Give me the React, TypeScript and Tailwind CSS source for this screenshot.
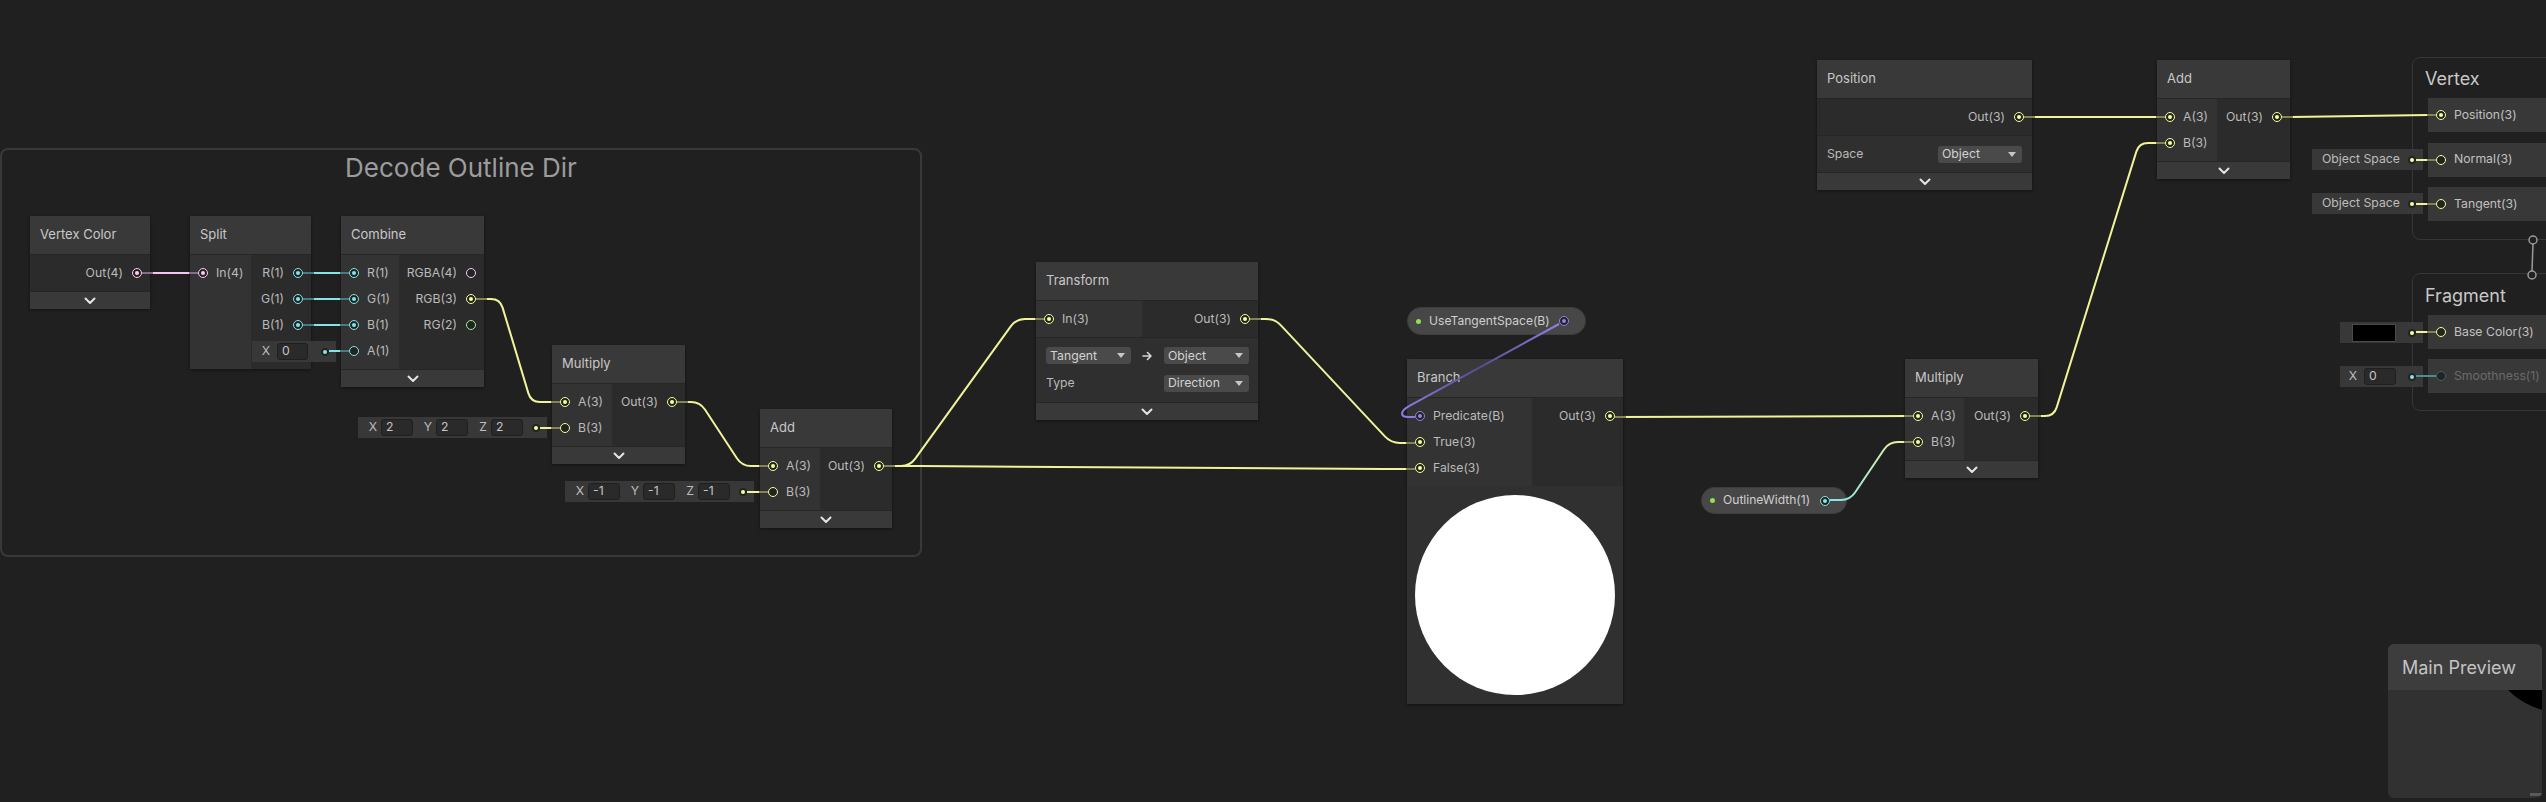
import React from 'react';

type PT = 'v1' | 'v2' | 'v3' | 'v4' | 'b' | 'off';

const RING: Record<PT, string> = {
  v1: 'border-[#84e4e7]',
  v2: 'border-[#9aef92]',
  v3: 'border-[#f6ff9a]',
  v4: 'border-[#fbcbf4]',
  b: 'border-[#9481e6]',
  off: 'border-[#3f6466]',
};

const DOT: Record<PT, string> = {
  v1: 'bg-[#84e4e7]',
  v2: 'bg-[#9aef92]',
  v3: 'bg-[#f6ff9a]',
  v4: 'bg-[#fbcbf4]',
  b: 'bg-[#9481e6]',
  off: 'bg-[#3f6466]',
};

interface PortDef {
  label: string;
  t: PT;
  on?: boolean;
}

const Ring = ({ t, on }: { t: PT; on?: boolean }) => (
  <span className={`flex h-[10px] w-[10px] shrink-0 items-center justify-center rounded-full border-[1.5px] bg-[#232323] ${RING[t]}`}>
    {on && <span className={`h-[4px] w-[4px] rounded-full ${DOT[t]}`} />}
  </span>
);

const Chevron = () => (
  <svg width="12" height="8" viewBox="0 0 12 8">
    <path d="M1.5 1.5 6 6 10.5 1.5" fill="none" stroke="#e4e4e4" strokeWidth="2" strokeLinecap="round" strokeLinejoin="round" />
  </svg>
);

const Drop = ({ label, w }: { label: string; w: string }) => (
  <div className={`flex h-[17px] items-center justify-between rounded-[3px] bg-[#4a4a4a] pl-[4px] pr-[6px] text-[#d2d2d2] ${w}`}>
    <span>{label}</span>
    <span className="h-0 w-0 border-x-[4px] border-t-[5px] border-x-transparent border-t-[#c6c6c6]" />
  </div>
);

interface NodeProps {
  pos: string;
  title: string;
  inCol?: string;
  ins?: PortDef[];
  outs?: PortDef[];
  chevron?: boolean;
  children?: React.ReactNode;
}

const Node: React.FC<NodeProps> = ({ pos, title, inCol, ins, outs, chevron = true, children }) => (
  <div className={`absolute flex flex-col text-[12.25px] text-[#bababa] shadow-[0_1px_3px_rgba(0,0,0,0.45)] ${pos}`}>
    <div className="flex h-[39px] shrink-0 items-center border-b border-[#262626] bg-[#393939] px-[10px] text-[13px] text-[#c8c8c8]">
      {title}
    </div>
    <div className="flex">
      {ins && (
        <div className={`flex flex-col bg-[#333333] py-[5px] ${inCol}`}>
          {ins.map((p) => (
            <div key={p.label} className="flex h-[26px] items-center gap-[8px] pl-[8px]">
              <Ring t={p.t} on={p.on} />
              <span>{p.label}</span>
            </div>
          ))}
        </div>
      )}
      <div className="flex flex-1 flex-col bg-[#2b2b2b] py-[5px]">
        {outs?.map((p, i) => (
          <div key={i} className="flex h-[26px] items-center justify-end gap-[9px] pr-[8px]">
            {p.label && <span>{p.label}</span>}
            <Ring t={p.t} on={p.on} />
          </div>
        ))}
      </div>
    </div>
    {children}
    {chevron && (
      <div className="flex h-[18px] items-center justify-center border-t border-[#262626] bg-[#393939]">
        <Chevron />
      </div>
    )}
  </div>
);

const Field = ({ v, w = 'w-[32px]' }: { v: string; w?: string }) => (
  <span className={`flex h-[17px] items-center rounded-[3px] border border-[#1f1f1f] bg-[#2a2a2a] pl-[4px] text-[#c4c4c4] ${w}`}>{v}</span>
);

const Inline = ({ pos, t, children }: { pos: string; t: PT; children: React.ReactNode }) => (
  <div className={`absolute flex h-[21px] items-center bg-[#383838] text-[12.25px] text-[#bdbdbd] ${pos}`}>
    {children}
    <span className="ml-auto mr-[7px] flex h-[8px] w-[8px] items-center justify-center rounded-full bg-[#242424]">
      <span className={`h-[4px] w-[4px] rounded-full ${DOT[t]}`} />
    </span>
  </div>
);

const Vec = ({ v }: { v: string }) => (
  <div className="flex items-center gap-[9px] pl-[9px]">
    {['X', 'Y', 'Z'].map((a) => (
      <div key={a} className="flex items-center gap-[2px]">
        <span className="w-[12px] text-center">{a}</span>
        <Field v={v} />
      </div>
    ))}
  </div>
);

const Pill = ({ pos, label, t }: { pos: string; label: string; t: PT }) => (
  <div className={`absolute flex items-center rounded-full border border-[#3d3d3d] bg-[#474747] pl-[8px] text-[12.1px] text-[#cfcfcf] ${pos}`}>
    <span className="h-[5px] w-[5px] shrink-0 rounded-full bg-[#8fe055]" />
    <span className="ml-[8px] whitespace-nowrap">{label}</span>
    <span className="ml-auto mr-[16px]">
      <Ring t={t} on />
    </span>
  </div>
);

const BlockRow = ({ label, t, on, dim }: { label: string; t: PT; on?: boolean; dim?: boolean }) => (
  <div className="flex h-[34px] items-center gap-[8px] bg-[#383838] pl-[8px] text-[12.25px]">
    <Ring t={t} on={on} />
    <span className={dim ? 'text-[#6a6a6a]' : 'text-[#c0c0c0]'}>{label}</span>
  </div>
);

type Pt = [number, number];

// straight segments with softened corners, like the graph view draws edges
const route = (pts: Pt[], r = 9) => {
  let d = `M ${pts[0][0]} ${pts[0][1]}`;
  for (let i = 1; i < pts.length - 1; i++) {
    const [px, py] = pts[i - 1];
    const [cx, cy] = pts[i];
    const [nx, ny] = pts[i + 1];
    const l1 = Math.hypot(cx - px, cy - py);
    const l2 = Math.hypot(nx - cx, ny - cy);
    const a = Math.min(r, l1 / 2);
    const b = Math.min(r, l2 / 2);
    d += ` L ${cx - ((cx - px) / l1) * a} ${cy - ((cy - py) / l1) * a}`;
    d += ` Q ${cx} ${cy} ${cx + ((nx - cx) / l2) * b} ${cy + ((ny - cy) / l2) * b}`;
  }
  const last = pts[pts.length - 1];
  return d + ` L ${last[0]} ${last[1]}`;
};

const YEL = '#f1f39a';
const CYAN = '#84e4e7';
const PINK = '#f7c4f0';

const wires: { pts: Pt[]; c: string }[] = [
  { pts: [[142, 273], [198, 273]], c: PINK },
  { pts: [[303, 273], [349, 273]], c: CYAN },
  { pts: [[303, 299], [349, 299]], c: CYAN },
  { pts: [[303, 325], [349, 325]], c: CYAN },
  { pts: [[329, 351], [349, 351]], c: CYAN },
  { pts: [[476, 299], [500, 299], [531, 402], [560, 402]], c: YEL },
  { pts: [[540, 428], [560, 428]], c: YEL },
  { pts: [[677, 402], [700, 402], [742, 466], [768, 466]], c: YEL },
  { pts: [[747, 492], [768, 492]], c: YEL },
  { pts: [[884, 466], [910, 466], [1016, 319], [1044, 319]], c: YEL },
  { pts: [[884, 466], [910, 466], [1392, 469], [1415, 469]], c: YEL },
  { pts: [[1250, 319], [1275, 319], [1391, 443], [1415, 443]], c: YEL },
  { pts: [[1615, 417], [1913, 416]], c: YEL },
  { pts: [[1830, 500], [1850, 500], [1889, 442], [1913, 442]], c: 'url(#ow)' },
  { pts: [[2030, 416], [2054, 416], [2139, 143], [2165, 143]], c: YEL },
  { pts: [[2024, 117], [2165, 117]], c: YEL },
  { pts: [[2282, 117], [2300, 117], [2420, 115], [2436, 115]], c: YEL },
  { pts: [[2416, 160], [2436, 160]], c: YEL },
  { pts: [[2416, 204], [2436, 204]], c: YEL },
  { pts: [[2416, 332], [2436, 332]], c: YEL },
  { pts: [[2416, 376], [2436, 376]], c: '#4d8b8e' },
  { pts: [[1559, 324], [1402, 410], [1402, 417], [1415, 417]], c: 'url(#pu)' },
];

const outStubs: Pt[] = [
  [137, 273], [298, 273], [298, 299], [298, 325], [471, 299], [672, 402], [879, 466],
  [1245, 319], [1610, 417], [2025, 416], [2019, 117], [2277, 117],
];
const inStubs: Pt[] = [
  [203, 273], [354, 273], [354, 299], [354, 325], [354, 351], [565, 402], [565, 428],
  [773, 466], [773, 492], [1049, 319], [1420, 443], [1420, 469], [1918, 416], [1918, 442],
  [2170, 117], [2170, 143], [2441, 115], [2441, 160], [2441, 204], [2441, 332],
];

const v3 = (label: string, on = true): PortDef => ({ label, t: 'v3', on });

export default function App() {
  return (
    <div className="relative h-[802px] w-[2546px] overflow-hidden bg-[#202020] font-['Inter','Liberation_Sans',sans-serif]">
      {/* group frame */}
      <div className="absolute left-0 top-[148px] h-[409px] w-[922px] rounded-[8px] border-2 border-[#393939]">
        <div className="pt-[2px] text-center text-[26px] leading-[32px] text-[#9c9c9c]">Decode Outline Dir</div>
      </div>

      <Node pos="left-[30px] top-[216px] w-[120px]" title="Vertex Color" outs={[{ label: 'Out(4)', t: 'v4', on: true }]} />
      <Node
        pos="left-[190px] top-[216px] w-[121px]"
        title="Split"
        inCol="w-[61px]"
        chevron={false}
        ins={[{ label: 'In(4)', t: 'v4', on: true }]}
        outs={[
          { label: 'R(1)', t: 'v1', on: true },
          { label: 'G(1)', t: 'v1', on: true },
          { label: 'B(1)', t: 'v1', on: true },
          { label: '', t: 'v1' },
        ]}
      />
      <Node
        pos="left-[341px] top-[216px] w-[143px]"
        title="Combine"
        inCol="w-[58px]"
        ins={[
          { label: 'R(1)', t: 'v1', on: true },
          { label: 'G(1)', t: 'v1', on: true },
          { label: 'B(1)', t: 'v1', on: true },
          { label: 'A(1)', t: 'v1' },
        ]}
        outs={[
          { label: 'RGBA(4)', t: 'v4' },
          { label: 'RGB(3)', t: 'v3', on: true },
          { label: 'RG(2)', t: 'v2' },
        ]}
      />
      <Node pos="left-[552px] top-[345px] w-[133px]" title="Multiply" inCol="w-[60px]" ins={[v3('A(3)'), v3('B(3)', false)]} outs={[v3('Out(3)')]} />
      <Node pos="left-[760px] top-[409px] w-[132px]" title="Add" inCol="w-[60px]" ins={[v3('A(3)'), v3('B(3)', false)]} outs={[v3('Out(3)')]} />

      <Inline pos="left-[252px] top-[341px] w-[84px]" t="v1">
        <div className="flex items-center gap-[5px] pl-[8px]">
          <span className="w-[12px] text-center">X</span>
          <Field v="0" w="w-[31px]" />
        </div>
      </Inline>
      <Inline pos="left-[358px] top-[417px] w-[189px]" t="v3">
        <Vec v="2" />
      </Inline>
      <Inline pos="left-[565px] top-[481px] w-[189px]" t="v3">
        <Vec v="-1" />
      </Inline>

      <Node pos="left-[1036px] top-[262px] w-[222px]" title="Transform" inCol="w-[106px]" ins={[v3('In(3)')]} outs={[v3('Out(3)')]}>
        <div className="flex h-[65px] flex-col justify-center gap-[10px] border-t border-[#262626] bg-[#2f2f2f] pl-[10px] pr-[9px]">
          <div className="flex items-center justify-between">
            <Drop label="Tangent" w="w-[85px]" />
            <svg width="11" height="10" viewBox="0 0 11 10">
              <path d="M1 5h8M5.5 1.5 9 5 5.5 8.5" fill="none" stroke="#d6d6d6" strokeWidth="1.6" strokeLinecap="round" strokeLinejoin="round" />
            </svg>
            <Drop label="Object" w="w-[85px]" />
          </div>
          <div className="flex items-center justify-between">
            <span>Type</span>
            <Drop label="Direction" w="w-[85px]" />
          </div>
        </div>
      </Node>

      <Pill pos="left-[1407px] top-[307px] h-[28px] w-[179px]" label="UseTangentSpace(B)" t="b" />

      <Node
        pos="left-[1407px] top-[359px] w-[216px]"
        title="Branch"
        inCol="w-[125px]"
        chevron={false}
        ins={[{ label: 'Predicate(B)', t: 'b', on: true }, v3('True(3)'), v3('False(3)')]}
        outs={[v3('Out(3)')]}
      >
        <div className="flex h-[218px] items-center justify-center bg-[#303030]">
          <div className="h-[200px] w-[200px] rounded-full bg-white" />
        </div>
      </Node>

      <Pill pos="left-[1701px] top-[487px] h-[27px] w-[146px]" label="OutlineWidth(1)" t="v1" />
      <Node pos="left-[1905px] top-[359px] w-[133px]" title="Multiply" inCol="w-[59px]" ins={[v3('A(3)'), v3('B(3)')]} outs={[v3('Out(3)')]} />

      <Node pos="left-[1817px] top-[60px] w-[215px]" title="Position" outs={[v3('Out(3)')]}>
        <div className="flex h-[37px] items-center justify-between border-t border-[#262626] bg-[#2f2f2f] px-[10px]">
          <span>Space</span>
          <Drop label="Object" w="w-[84px]" />
        </div>
      </Node>
      <Node pos="left-[2157px] top-[60px] w-[133px]" title="Add" inCol="w-[60px]" ins={[v3('A(3)'), v3('B(3)')]} outs={[v3('Out(3)')]} />

      {/* master stack */}
      <div className="absolute left-[2412px] top-[57px] flex h-[183px] w-[220px] flex-col rounded-[8px] border border-[#363636] pt-[9px]">
        <div className="h-[24px] pl-[12px] text-[18px] leading-[24px] text-[#c8c8c8]">Vertex</div>
        <div className="mt-[7px] flex flex-col gap-[10.5px] pl-[15px]">
          <BlockRow label="Position(3)" t="v3" on />
          <BlockRow label="Normal(3)" t="v3" />
          <BlockRow label="Tangent(3)" t="v3" />
        </div>
      </div>
      <div className="absolute left-[2412px] top-[273px] flex h-[138px] w-[220px] flex-col rounded-[8px] border border-[#363636] pt-[10px]">
        <div className="h-[24px] pl-[12px] text-[18px] leading-[24px] text-[#c8c8c8]">Fragment</div>
        <div className="mt-[7px] flex flex-col gap-[10px] pl-[15px]">
          <BlockRow label="Base Color(3)" t="v3" />
          <BlockRow label="Smoothness(1)" t="off" dim />
        </div>
      </div>

      <Inline pos="left-[2312px] top-[149px] w-[111px]" t="v3">
        <span className="pl-[10px]">Object Space</span>
      </Inline>
      <Inline pos="left-[2312px] top-[193px] w-[111px]" t="v3">
        <span className="pl-[10px]">Object Space</span>
      </Inline>
      <Inline pos="left-[2340px] top-[322px] w-[83px]" t="v3">
        <span className="ml-[12px] h-[18px] w-[44px] border border-[#4a4a4a] bg-black" />
      </Inline>
      <Inline pos="left-[2340px] top-[366px] w-[83px]" t="v1">
        <div className="flex items-center gap-[5px] pl-[7px]">
          <span className="w-[12px] text-center">X</span>
          <Field v="0" />
        </div>
      </Inline>

      {/* main preview */}
      <div className="absolute left-[2388px] top-[644px] flex h-[154px] w-[154px] flex-col overflow-hidden rounded-[6px] bg-[#313131]">
        <div className="flex h-[46px] shrink-0 items-center bg-[#3d3d3d] pl-[14px] text-[18px] text-[#c4c4c4]">Main Preview</div>
        <div className="relative flex-1 overflow-hidden">
          <div className="absolute left-[100px] top-[-122px] h-[144px] w-[144px] rounded-full bg-black" />
          <div className="absolute bottom-[2px] right-0 h-[3px] w-[12px] bg-[#5a5a5a]" />
        </div>
      </div>

      <svg className="pointer-events-none absolute left-0 top-0" width="2546" height="802">
        <defs>
          <linearGradient id="ow" gradientUnits="userSpaceOnUse" x1="1830" y1="500" x2="1913" y2="442">
            <stop offset="0" stopColor="#84e4e7" />
            <stop offset="1" stopColor="#f1f39a" />
          </linearGradient>
          <linearGradient id="pu" gradientUnits="userSpaceOnUse" x1="1559" y1="324" x2="1402" y2="417">
            <stop offset="0" stopColor="#8f80ea" />
            <stop offset="0.5" stopColor="#554c8f" />
            <stop offset="1" stopColor="#8f80ea" />
          </linearGradient>
        </defs>
        {wires.map((w, i) => (
          <path key={i} d={route(w.pts)} fill="none" stroke={w.c} strokeWidth="2" strokeLinejoin="round" />
        ))}
        {outStubs.map(([x, y], i) => (
          <line key={`o${i}`} x1={x + 5} y1={y} x2={x + 16} y2={y} stroke="#000" strokeOpacity="0.45" strokeWidth="2.2" />
        ))}
        {inStubs.map(([x, y], i) => (
          <line key={`i${i}`} x1={x - 14} y1={y} x2={x - 5} y2={y} stroke="#000" strokeOpacity="0.45" strokeWidth="2.2" />
        ))}
        <line x1="2533" y1="244" x2="2532" y2="271" stroke="#9a9a9a" strokeWidth="1.5" />
        <circle cx="2533" cy="240" r="4" fill="#202020" stroke="#9a9a9a" strokeWidth="1.5" />
        <circle cx="2532" cy="275" r="4" fill="#202020" stroke="#9a9a9a" strokeWidth="1.5" />
      </svg>
    </div>
  );
}
